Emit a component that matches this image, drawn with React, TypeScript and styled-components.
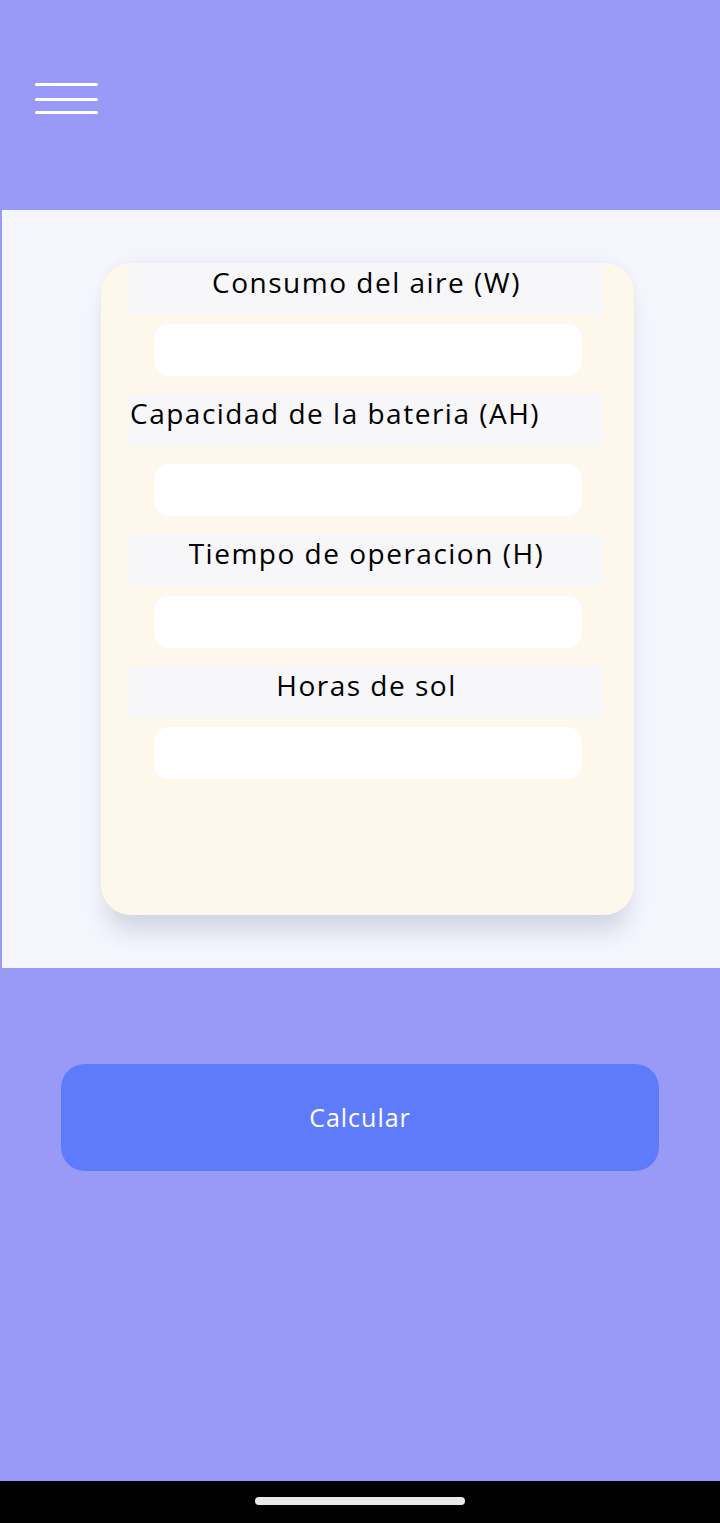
import React from 'react';
import styled, { createGlobalStyle } from 'styled-components';

const GlobalStyle = createGlobalStyle`
  html, body {
    margin: 0;
    padding: 0;
    background: #9999f8;
    font-family: 'Open Sans', 'Liberation Sans', sans-serif;
  }
  * { box-sizing: border-box; }
`;

const Screen = styled.div`
  width: 720px;
  height: 1523px;
  display: flex;
  flex-direction: column;
  background: #9999f8;
`;

const Header = styled.header`
  height: 210px;
  display: flex;
  align-items: flex-start;
  padding: 83px 0 0 35px;
`;

const MenuButton = styled.button`
  width: 64px;
  padding: 0;
  border: none;
  background: transparent;
  display: flex;
  flex-direction: column;
  cursor: pointer;
`;

const MenuLine = styled.span<{ $gap?: number }>`
  display: block;
  height: 3px;
  width: 63px;
  margin-top: ${(p) => p.$gap ?? 0}px;
  border-radius: 2px;
  background: #ffffff;
`;

const Panel = styled.main`
  height: 758px;
  margin-left: 2px;
  background: #f4f5fd;
  padding: 53px 0 0 99px;
`;

const Card = styled.section`
  width: 533px;
  height: 652px;
  background: #fdf7ec;
  border-radius: 30px;
  box-shadow: 0 22px 22px -6px rgba(60, 70, 110, 0.18), 0 -4px 10px -2px rgba(60, 70, 110, 0.05);
  display: flex;
  flex-direction: column;
  align-items: flex-start;
  padding: 0 0 0 28px;
`;

const Label = styled.label<{ $align?: 'left' | 'center' }>`
  width: 475px;
  height: 52px;
  background: #f7f6f8;
  border-radius: 4px;
  color: #000;
  font-size: 28px;
  line-height: 38px;
  letter-spacing: 1.5px;
  white-space: nowrap;
  text-align: ${(p) => (p.$align === 'left' ? 'left' : 'center')};
  padding-left: ${(p) => (p.$align === 'left' ? '1px' : '0')};
`;

const Input = styled.input<{ $top: number; $bottom: number }>`
  width: 428px;
  height: 52px;
  margin: ${(p) => p.$top}px 0 ${(p) => p.$bottom}px 25px;
  border: none;
  outline: none;
  border-radius: 15px;
  background: #ffffff;
  font-size: 22px;
  padding: 0 16px;
`;

const Footer = styled.div`
  flex: 1;
  padding: 96px 0 0 61px;
`;

const CalcButton = styled.button`
  width: 598px;
  height: 107px;
  border: none;
  border-radius: 24px;
  background: #5e7bfc;
  color: #ffffff;
  font-family: 'Open Sans', 'Liberation Sans', sans-serif;
  font-size: 25px;
  letter-spacing: 1px;
  padding-bottom: 3px;
  cursor: pointer;
`;

const NavBar = styled.div`
  height: 42px;
  background: #000;
  display: flex;
  justify-content: center;
  padding-top: 16px;
`;

const NavPill = styled.span`
  width: 210px;
  height: 8px;
  border-radius: 4px;
  background: #e8e8e8;
`;

const fields = [
  { label: 'Consumo del aire (W)', align: 'center' as const, top: 9, bottom: 18 },
  { label: 'Capacidad de la bateria (AH)', align: 'left' as const, top: 18, bottom: 18 },
  { label: 'Tiempo de operacion (H)', align: 'center' as const, top: 10, bottom: 18 },
  { label: 'Horas de sol', align: 'center' as const, top: 9, bottom: 0 },
];

export default function App() {
  return (
    <>
      <GlobalStyle />
      <Screen>
        <Header>
          <MenuButton aria-label="menu">
            <MenuLine />
            <MenuLine $gap={12} />
            <MenuLine $gap={10} />
          </MenuButton>
        </Header>
        <Panel>
          <Card>
            {fields.map((f) => (
              <React.Fragment key={f.label}>
                <Label $align={f.align}>{f.label}</Label>
                <Input type="number" $top={f.top} $bottom={f.bottom} />
              </React.Fragment>
            ))}
          </Card>
        </Panel>
        <Footer>
          <CalcButton>Calcular</CalcButton>
        </Footer>
        <NavBar>
          <NavPill />
        </NavBar>
      </Screen>
    </>
  );
}
